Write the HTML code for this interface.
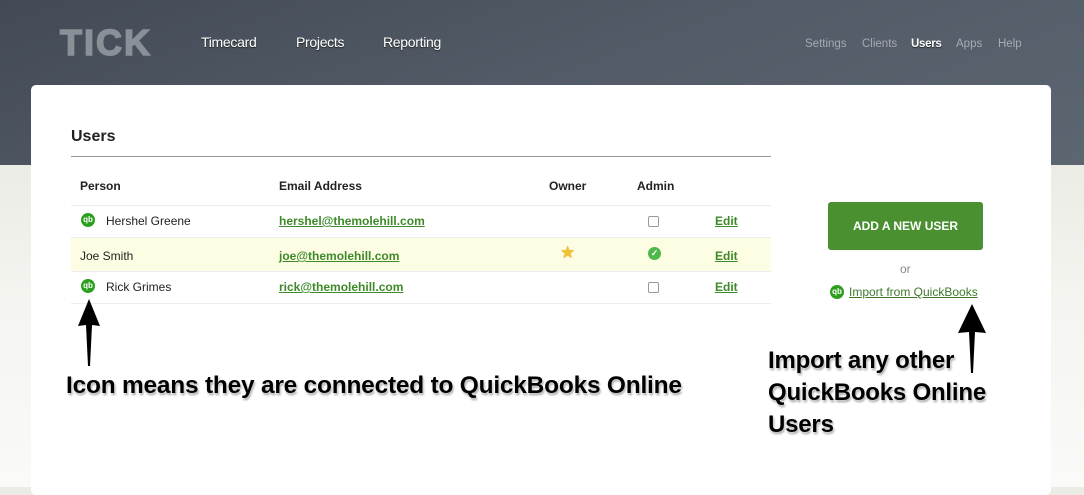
<!DOCTYPE html>
<html><head><style>
*{margin:0;padding:0;box-sizing:border-box}
body{width:1084px;height:487px;overflow:hidden;position:relative;font-family:"Liberation Sans",Arial,sans-serif;background:linear-gradient(#ecece6 165px,#f4f4f0 300px,#fafaf8 487px)}
.hdr{position:absolute;left:0;top:0;width:1084px;height:165px;background:linear-gradient(160deg,#434a55 0%,#525b67 50%,#5c6671 100%)}
.a{position:absolute;white-space:nowrap}
.nav{color:#fff;font-size:14px;text-shadow:0 1px 1px #222;top:34px;letter-spacing:-0.3px}
.snav{color:#a5abb3;font-size:11.5px;top:38px}
.panel{position:absolute;left:31px;top:85px;width:1020px;height:410px;background:#fff;border-radius:5px}
.line{position:absolute;left:71px;width:700px;height:1px;background:#ececec}
.th{font-size:12px;font-weight:bold;color:#222;top:179px}
.td{font-size:12px;color:#222}
.em{font-size:12px;font-weight:bold;color:#3e8a2a;text-decoration:underline}
.qb{position:absolute;width:14px;height:14px;border-radius:50%;background:#2ca01c;color:#fff;font-size:8px;font-weight:bold;text-align:center;line-height:14px}
.cb{position:absolute;width:11px;height:11px;border:1px solid #999;border-radius:2px;background:#fff}
.ann{position:absolute;font-weight:bold;font-size:24px;color:#000;text-shadow:0 0 2px #fff,1px 2px 2px #999;white-space:nowrap;letter-spacing:-0.2px}
</style></head><body>
<div class="hdr"></div>
<div class="a" style="left:60px;top:22px;font-size:36px;font-weight:900;color:#8a9097;letter-spacing:2px;-webkit-text-stroke:1.5px #8a9097">TICK</div>
<div class="a nav" style="left:201px">Timecard</div>
<div class="a nav" style="left:296px">Projects</div>
<div class="a nav" style="left:383px">Reporting</div>
<div class="a snav" style="left:805px">Settings</div>
<div class="a snav" style="left:862px">Clients</div>
<div class="a snav" style="left:911px;color:#fff;font-weight:bold;text-shadow:0 1px 1px #222;letter-spacing:-0.3px">Users</div>
<div class="a snav" style="left:956px">Apps</div>
<div class="a snav" style="left:998px">Help</div>
<div class="panel"></div>
<div class="a" style="left:71px;top:128px;font-size:16px;font-weight:bold;color:#222">Users</div>
<div class="line" style="top:156px;background:#999"></div>
<div class="a th" style="left:80px">Person</div>
<div class="a th" style="left:279px">Email Address</div>
<div class="a th" style="left:549px">Owner</div>
<div class="a th" style="left:637px">Admin</div>
<div class="line" style="top:205px"></div>
<div style="position:absolute;left:71px;top:238px;width:700px;height:33px;background:#fdfde3"></div>
<div class="line" style="top:237px"></div>
<div class="line" style="top:271px"></div>
<div class="line" style="top:303px"></div>
<div class="qb" style="left:81px;top:213px">qb</div>
<div class="a td" style="left:106px;top:214px">Hershel Greene</div>
<div class="a em" style="left:279px;top:214px">hershel@themolehill.com</div>
<div class="cb" style="left:648px;top:216px"></div>
<div class="a em" style="left:715px;top:214px">Edit</div>
<div class="a td" style="left:80px;top:249px">Joe Smith</div>
<div class="a em" style="left:279px;top:249px">joe@themolehill.com</div>
<div class="a" style="left:560px;top:243px;font-size:17px;color:#f2c12e;text-shadow:0 0 1px #b88a00">★</div>
<div style="position:absolute;left:648px;top:247px;width:13px;height:13px;border-radius:50%;background:#4fb84a;color:#fff;font-size:9px;text-align:center;line-height:13px;font-weight:bold">✓</div>
<div class="a em" style="left:715px;top:249px">Edit</div>
<div class="qb" style="left:81px;top:279px">qb</div>
<div class="a td" style="left:106px;top:280px">Rick Grimes</div>
<div class="a em" style="left:279px;top:280px">rick@themolehill.com</div>
<div class="cb" style="left:648px;top:282px"></div>
<div class="a em" style="left:715px;top:280px">Edit</div>
<div style="position:absolute;left:828px;top:202px;width:155px;height:48px;background:#4a8f30;border-radius:3px;color:#fff;font-size:12px;font-weight:bold;text-align:center;line-height:48px">ADD A NEW USER</div>
<div class="a" style="left:900px;top:262px;font-size:12px;color:#888">or</div>
<div class="qb" style="left:830px;top:285px">qb</div>
<div class="a" style="left:849px;top:285px;font-size:12px;color:#3e7a2a;text-decoration:underline">Import from QuickBooks</div>
<svg style="position:absolute;left:0;top:0" width="1084" height="487">
<path d="M89 299 L100 326 L92 325 L90 366 L88 366 L86 325 L78 326 Z" fill="#000"/>
<path d="M972 304 L986 333 L975 332 L973 373 L971 373 L969 332 L958 333 Z" fill="#000"/>
</svg>
<div class="ann" style="left:66px;top:372px;transform:scaleX(1.018);transform-origin:left">Icon means they are connected to QuickBooks Online</div>
<div class="ann" style="left:768px;top:347px">Import any other</div>
<div class="ann" style="left:768px;top:379px">QuickBooks Online</div>
<div class="ann" style="left:768px;top:411px">Users</div>
</body></html>
